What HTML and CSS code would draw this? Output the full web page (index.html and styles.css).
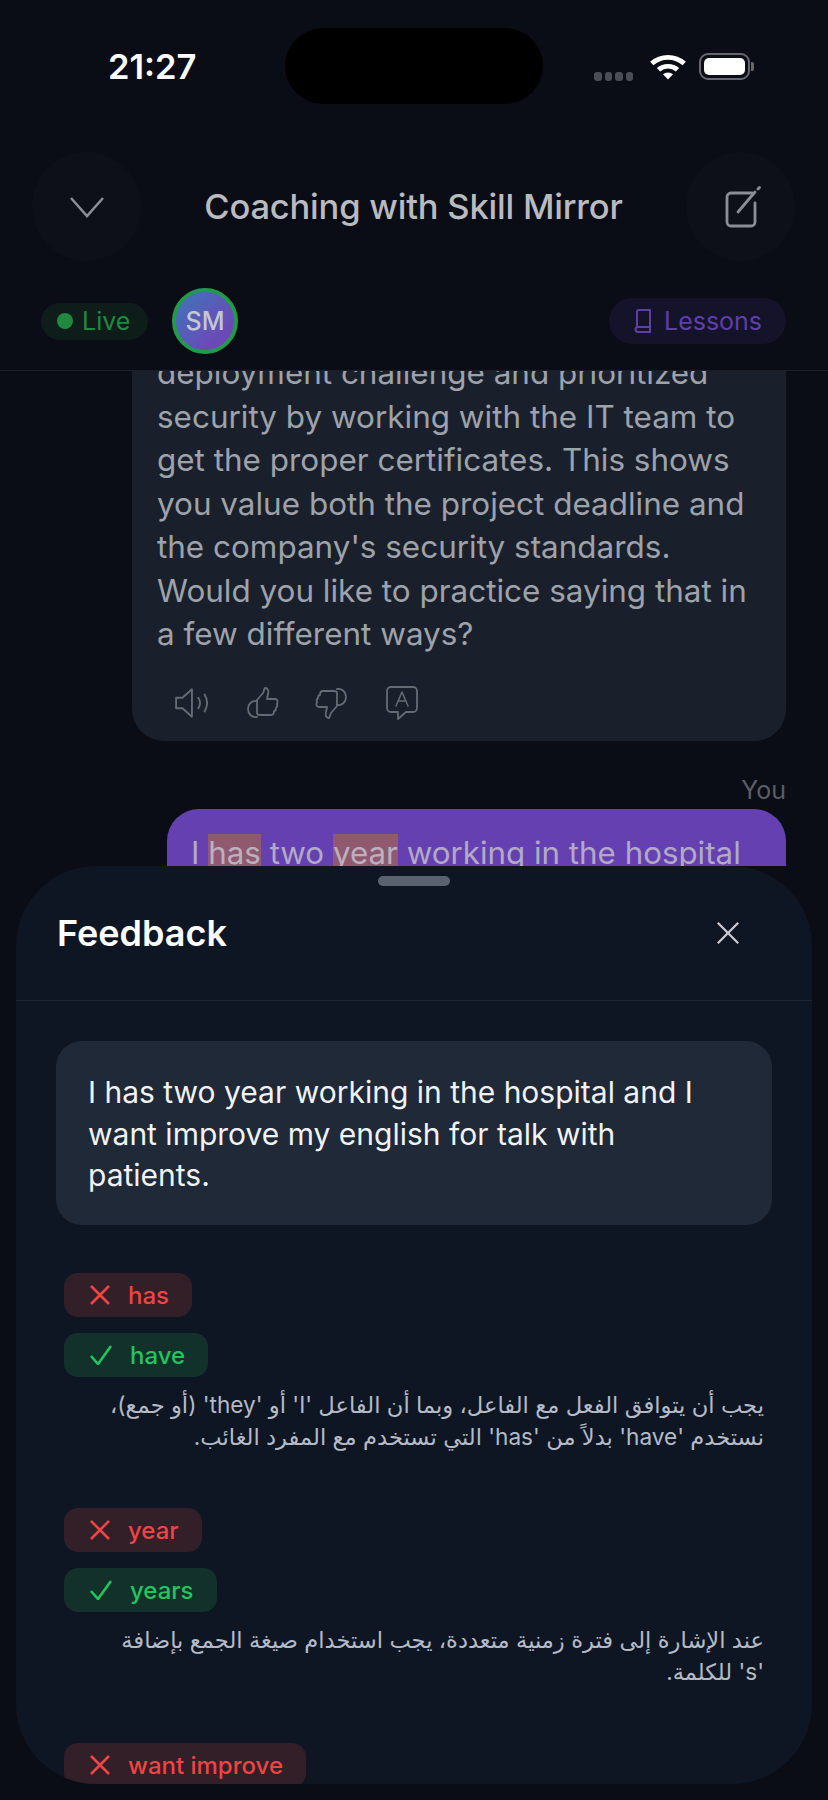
FILE: index.html
```html
<!DOCTYPE html>
<html lang="en">
<head>
  <meta charset="UTF-8">
  <title>Coaching with Skill Mirror</title>
  <link rel="stylesheet" href="styles.css">
</head>
<body>
  <div class="screen">
    <div class="status-bar">
      <span class="time">21:27</span>
      <div class="island"></div>
      <div class="status-icons">
        <span class="signal"><i></i><i></i><i></i><i></i></span>
        <svg class="wifi" width="38" height="27" viewBox="0 0 34 26" preserveAspectRatio="none">
          <path d="M1 8.5a23 23 0 0 1 32 0l-3 3.4a18.600 18.600 0 0 0-26 0z" fill="#fff"/>
          <path d="M7 14.500a14.500 14.500 0 0 1 20 0l-3 3.400a10 10 0 0 0-14 0z" fill="#fff"/>
          <path d="M12.500 20.500a6.500 6.500 0 0 1 9 0L17 25.500z" fill="#fff"/>
        </svg>
        <span class="battery"><b></b></span>
        <i class="battery-nub"></i>
      </div>
    </div>

    <header class="top-bar">
      <button class="round-btn">
        <svg width="36" height="22" viewBox="0 0 36 22" fill="none" stroke="#8b8e95" stroke-width="2.500"><path d="M2 2l16 18L34 2"/></svg>
      </button>
      <h1>Coaching with Skill Mirror</h1>
      <button class="round-btn compose-btn">
        <svg width="38" height="42" viewBox="1 0 36 42" fill="none" stroke="#8b8e95" stroke-width="2.800" stroke-linecap="round">
          <path d="M28 7H7a4 4 0 0 0-4 4v25a4 4 0 0 0 4 4h20a4 4 0 0 0 4-4V17"/>
          <path d="M14 26L31 6"/>
          <path d="M34 3l1.500-1.500"/>
        </svg>
      </button>
    </header>

    <div class="session-bar">
      <span class="live-pill"><i class="live-dot"></i>Live</span>
      <span class="avatar">SM</span>
      <span class="lessons-pill">
        <svg width="18" height="24" viewBox="0 0 18 24" fill="none" stroke="#5d3fa8" stroke-width="2"><path d="M3 19V3a2 2 0 0 1 2-2h11v17H4a2.500 2.500 0 0 0 0 5h12v-5"/></svg>
        Lessons
      </span>
    </div>

    <main class="chat">
      <div class="bubble-coach">
        <p>deployment challenge and prioritized security by working with the IT team to get the proper certificates. This shows you value both the project deadline and the company's security standards. Would you like to practice saying that in a few different ways?</p>
        <div class="bubble-actions">
          <svg width="38" height="32" viewBox="0 0 36 30" fill="none" stroke="#666b73" stroke-width="1.800" stroke-linejoin="round" stroke-linecap="round"><path d="M2 10v10h6l9 8V2l-9 8z"/><path d="M23 10c2 3 2 7 0 10"/><path d="M29 7c3 5 3 11 0 16"/></svg>
          <svg width="34" height="34" viewBox="0 0 34 34" fill="none" stroke="#666b73" stroke-width="1.800" stroke-linejoin="round" stroke-linecap="round"><path d="M11 14l6-7c1-2 1-4 2-5 3 0 4 3 3 6l-1 5h8c3 0 3 3 2 5 1 2 0 3-1 4 0 2-1 3-2 3 0 2-1 4-3 4H14c-2 0-3-1-3-2z"/><path d="M11 15c-5-1-9 3-9 8s4 9 9 8"/></svg>
          <svg width="34" height="34" viewBox="0 0 34 34" fill="none" stroke="#666b73" stroke-width="1.800" stroke-linejoin="round" stroke-linecap="round"><path d="M23 20l-6 7c-1 2-1 4-2 5-3 0-4-3-3-6l1-5H5c-3 0-3-3-2-5-1-2 0-3 1-4 0-2 1-3 2-3 0-2 1-4 3-4h11c2 0 3 1 3 2z"/><path d="M23 19c5 1 9-3 9-8s-4-9-9-8"/></svg>
          <svg width="34" height="34" viewBox="0 0 34 34" fill="none" stroke="#666b73" stroke-width="1.800" stroke-linejoin="round" stroke-linecap="round"><path d="M6 1h22a4 4 0 0 1 4 4v17a4 4 0 0 1-4 4h-7l-8 7v-7H6a4 4 0 0 1-4-4V5a4 4 0 0 1 4-4z"/><path d="M11 20l6-14 6 14M13 15h8" stroke-width="1.500"/></svg>
        </div>
      </div>
      <div class="sender">You</div>
      <div class="bubble-user">I <mark>has</mark> two <mark>year</mark> working in the hospital</div>
    </main>

    <section class="sheet">
      <div class="handle"></div>
      <div class="sheet-head">
        <h2>Feedback</h2>
        <svg width="26" height="26" viewBox="0 0 28 28" fill="none" stroke="#c9ccd2" stroke-width="2.400"><path d="M3 3l22 22M25 3L3 25"/></svg>
      </div>
      <div class="sheet-body">
        <div class="original">I has two year working in the hospital and I want improve my english for talk with patients.</div>

        <div class="correction">
          <span class="chip chip-bad"><svg width="20" height="20" viewBox="0 0 20 20"><path d="M1 1l18 18M19 1L1 19"/></svg>has</span>
          <span class="chip chip-good"><svg width="22" height="20" viewBox="0 0 22 20"><path d="M1 11l7 8L21 1"/></svg>have</span>
          <p class="explain" dir="rtl">يجب أن يتوافق الفعل مع الفاعل، وبما أن الفاعل 'I' أو 'they' (أو جمع)، نستخدم 'have' بدلاً من 'has' التي تستخدم مع المفرد الغائب.</p>
        </div>

        <div class="correction">
          <span class="chip chip-bad"><svg width="20" height="20" viewBox="0 0 20 20"><path d="M1 1l18 18M19 1L1 19"/></svg>year</span>
          <span class="chip chip-good"><svg width="22" height="20" viewBox="0 0 22 20"><path d="M1 11l7 8L21 1"/></svg>years</span>
          <p class="explain" dir="rtl">عند الإشارة إلى فترة زمنية متعددة، يجب استخدام صيغة الجمع بإضافة 's' للكلمة.</p>
        </div>

        <div class="correction">
          <span class="chip chip-bad"><svg width="20" height="20" viewBox="0 0 20 20"><path d="M1 1l18 18M19 1L1 19"/></svg>want improve</span>
        </div>
      </div>
    </section>
  </div>
</body>
</html>
```

FILE: styles.css
```css
* {
  box-sizing: border-box;
}
body {
  margin: 0;
  background: #0a0d15;
  font-family: Inter, "DejaVu Sans", sans-serif;
}
.screen {
  position: relative;
  width: 828px;
  height: 1800px;
  overflow: hidden;
  background: #0a0d15;
}

/* status bar */
.status-bar {
  height: 137px;
  padding: 28px 74px 0 108px;
  display: flex;
  align-items: flex-start;
}
.time {
  width: 177px;
  margin-top: 17px;
  font-size: 34.500px;
  line-height: 44px;
  font-weight: 600;
  color: #fff;
}
.island {
  width: 258px;
  height: 76px;
  border-radius: 38px;
  background: #000;
}
.status-icons {
  display: flex;
  align-items: center;
  gap: 12px;
  margin-top: 24px;
  margin-left: auto;
}
.signal {
  display: flex;
  gap: 3px;
  margin-top: 20px;
  margin-right: 4px;
}
.signal i {
  width: 7.500px;
  height: 9px;
  border-radius: 3px;
  background: #4a4d55;
}
.battery {
  display: block;
  width: 51px;
  height: 27px;
  padding: 3px;
  border: 2px solid #65676d;
  border-radius: 9px;
}
.battery b {
  display: block;
  height: 100%;
  border-radius: 5px;
  background: #fff;
}
.battery-nub {
  width: 3px;
  height: 9px;
  margin-left: -11px;
  border-radius: 0 2px 2px 0;
  background: #65676d;
}

/* title row */
.top-bar {
  height: 147px;
  padding: 0 33px 8px 32px;
  display: flex;
  justify-content: space-between;
  align-items: center;
}
.round-btn {
  width: 109px;
  height: 109px;
  padding: 0;
  border: none;
  border-radius: 50%;
  background: #0d1018;
  display: flex;
  align-items: center;
  justify-content: center;
}
.compose-btn {
  padding-left: 6px;
}
.top-bar h1 {
  margin: 0;
  font-size: 34.500px;
  font-weight: 500;
  letter-spacing: -0.2px;
  color: #b9bbc0;
}

.session-bar {
  height: 87px;
  padding: 4px 42px 16px 41px;
  display: flex;
  align-items: center;
  border-bottom: 1px solid #1b1e27;
}
.live-pill {
  height: 37px;
  width: 107px;
  padding-left: 16px;
  display: flex;
  align-items: center;
  gap: 9px;
  border-radius: 19px;
  background: #0e1d19;
  font-size: 25px;
  color: #1f8a3e;
}
.live-dot {
  width: 16px;
  height: 16px;
  border-radius: 50%;
  background: #1f8a3e;
}
.avatar {
  width: 66px;
  height: 66px;
  margin-left: 24px;
  display: flex;
  align-items: center;
  justify-content: center;
  border: 4px solid #23994a;
  border-radius: 50%;
  background: linear-gradient(135deg, #3d76b8, #7a3cb8);
  font-size: 25px;
  font-weight: 500;
  color: #c4c6d4;
}
.lessons-pill {
  margin-left: auto;
  height: 46px;
  width: 177px;
  padding-left: 25px;
  display: flex;
  align-items: center;
  gap: 12px;
  border-radius: 23px;
  background: #15132a;
  font-size: 25px;
  color: #5d3fa8;
}

/* chat behind the sheet */
.chat {
  height: 495px;
  overflow: hidden;
  padding: 0 42px 0 132px;
}
.bubble-coach {
  margin-top: -19px;
  padding: 0 25px 24px;
  border-radius: 0 0 32px 32px;
  background: #1a202b;
  height: 389px;
}
.bubble-coach p {
  margin: 0;
  font-size: 31.450px;
  line-height: 43.500px;
  color: #9ea2aa;
}
.bubble-actions {
  display: flex;
  align-items: center;
  gap: 34px;
  margin-top: 29px;
  padding-left: 17px;
}
.bubble-actions svg:last-child {
  margin-left: 3px;
}
.sender {
  margin-top: 32px;
  text-align: right;
  font-size: 25px;
  line-height: 34px;
  color: #5b5e66;
}
.bubble-user {
  margin: 2px 0 0 35px;
  height: 120px;
  padding: 25px 24px;
  border-radius: 32px;
  background: #6540b0;
  font-size: 31.300px;
  line-height: 38px;
  color: #b2a9c6;
  white-space: nowrap;
}
.bubble-user mark {
  background: #8f5a6f;
  color: #bcb0c0;
}

/* feedback sheet */
.sheet {
  position: absolute;
  left: 16px;
  top: 866px;
  width: 796px;
  height: 918px;
  overflow: hidden;
  border-radius: 80px;
  background: #0f1623;
}
.handle {
  width: 72px;
  height: 10px;
  margin: 10px auto 0;
  border-radius: 5px;
  background: #5a626f;
}
.sheet-head {
  height: 115px;
  padding: 0 71px 20px 41px;
  display: flex;
  justify-content: space-between;
  align-items: center;
  border-bottom: 1px solid #1f2632;
}
.sheet-head h2 {
  margin: 0;
  font-size: 36px;
  font-weight: 600;
  color: #fff;
}
.sheet-body {
  padding: 40px 40px 0;
}
.original {
  height: 184px;
  padding: 31px 32px 0;
  border-radius: 26px;
  background: #1f2937;
  font-size: 30px;
  line-height: 41.500px;
  color: #f0f2f5;
}
.correction {
  padding: 48px 8px 0;
  display: flex;
  flex-direction: column;
  align-items: flex-start;
  gap: 16px;
}
.correction + .correction {
  padding-top: 55px;
}
.chip {
  height: 44px;
  padding: 0 23px 0 26px;
  display: flex;
  align-items: center;
  gap: 18px;
  border-radius: 14px;
  font-size: 24px;
  font-weight: 500;
}
.chip svg {
  fill: none;
  stroke-width: 2.600;
}
.chip-bad {
  background: #321f27;
  color: #ef4444;
}
.chip-bad svg {
  stroke: #ef4444;
}
.chip-good {
  background: #12312b;
  color: #22c55e;
}
.chip-good svg {
  stroke: #22c55e;
}
.explain {
  width: 100%;
  margin: -4px 0 0;
  padding-left: 42px;
  font-size: 22.600px;
  line-height: 32px;
  color: #b4bbc7;
}
```
